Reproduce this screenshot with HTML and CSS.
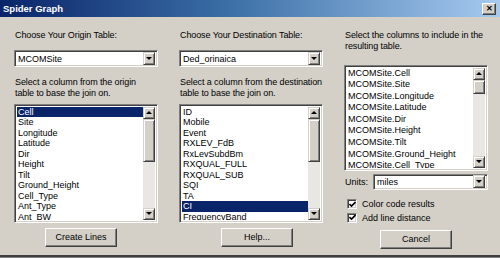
FILE: index.html
```html
<!DOCTYPE html>
<html lang="en">
<head>
  <meta charset="UTF-8" />
  <title>Spider Graph</title>
  <link rel="stylesheet" href="styles.css">
</head>
<body>
  <div class="window">
    <div class="titlebar">
      <span class="title">Spider Graph</span>
      <span class="close">&#x2715;</span>
    </div>

    <div class="panel">
      <!-- origin -->
      <div class="col">
        <p class="label first">Choose Your Origin Table:</p>
        <div class="combo"><span class="value">MCOMSite</span><span class="drop"><i class="arrow down"></i></span></div>
        <p class="label help">Select a column from the origin<br>table to base the join on.</p>
        <div class="list join">
          <ul>
            <li class="sel">Cell</li>
            <li>Site</li>
            <li>Longitude</li>
            <li>Latitude</li>
            <li>Dir</li>
            <li>Height</li>
            <li>Tilt</li>
            <li>Ground_Height</li>
            <li>Cell_Type</li>
            <li>Ant_Type</li>
            <li>Ant_BW</li>
          </ul>
          <div class="scroll">
            <span class="sb-btn"><i class="arrow up"></i></span>
            <span class="thumb"></span>
            <span class="track"></span>
            <span class="sb-btn"><i class="arrow down"></i></span>
          </div>
        </div>
        <button class="btn create">Create Lines</button>
      </div>

      <!-- destination -->
      <div class="col">
        <p class="label first">Choose Your Destination Table:</p>
        <div class="combo"><span class="value">Ded_orinaica</span><span class="drop"><i class="arrow down"></i></span></div>
        <p class="label help">Select a column from the destination<br>table to base the join on.</p>
        <div class="list join">
          <ul>
            <li>ID</li>
            <li>Mobile</li>
            <li>Event</li>
            <li>RXLEV_FdB</li>
            <li>RxLevSubdBm</li>
            <li>RXQUAL_FULL</li>
            <li>RXQUAL_SUB</li>
            <li>SQI</li>
            <li>TA</li>
            <li class="sel">CI</li>
            <li>FrequencyBand</li>
          </ul>
          <div class="scroll">
            <span class="sb-btn"><i class="arrow up"></i></span>
            <span class="thumb"></span>
            <span class="track"></span>
            <span class="sb-btn"><i class="arrow down"></i></span>
          </div>
        </div>
        <button class="btn helpbtn">Help...</button>
      </div>

      <!-- result columns -->
      <div class="col">
        <p class="label first">Select the columns to include in the<br>resulting table.</p>
        <div class="list result">
          <ul>
            <li>MCOMSite.Cell</li>
            <li>MCOMSite.Site</li>
            <li>MCOMSite.Longitude</li>
            <li>MCOMSite.Latitude</li>
            <li>MCOMSite.Dir</li>
            <li>MCOMSite.Height</li>
            <li>MCOMSite.Tilt</li>
            <li>MCOMSite.Ground_Height</li>
            <li>MCOMSite.Cell_Type</li>
          </ul>
          <div class="scroll">
            <span class="sb-btn"><i class="arrow up"></i></span>
            <span class="thumb short"></span>
            <span class="track"></span>
            <span class="sb-btn"><i class="arrow down"></i></span>
          </div>
        </div>
        <div class="units">
          <span class="units-label">Units:</span>
          <div class="combo"><span class="value">miles</span><span class="drop"><i class="arrow down"></i></span></div>
        </div>
        <label class="check first-check">
          <span class="box"><svg width="7" height="7" viewBox="0 0 7 7"><polyline points="0.5,3 2.5,5 6.5,1" fill="none" stroke="#000" stroke-width="1.6"/></svg></span>
          Color code results
        </label>
        <label class="check">
          <span class="box"><svg width="7" height="7" viewBox="0 0 7 7"><polyline points="0.5,3 2.5,5 6.5,1" fill="none" stroke="#000" stroke-width="1.6"/></svg></span>
          Add line distance
        </label>
        <button class="btn cancel">Cancel</button>
      </div>
    </div>
  </div>
</body>
</html>
```

FILE: styles.css
```css
:root {
  --face: #d4d0c8;
  --shadow: #808080;
  --dark: #404040;
  --light: #ffffff;
  --select: #0a246a;
  --track: #e9e7e3;
  --font: "Liberation Sans", Arial, sans-serif;
}
* { box-sizing: border-box; margin: 0; padding: 0; }
body {
  width: 500px;
  height: 258px;
  overflow: hidden;
  background: var(--face);
  font-family: var(--font);
  font-size: 9px;
  color: #000;
}
.window {
  height: 258px;
  display: flex;
  flex-direction: column;
  border-bottom: 1px solid var(--shadow);
  box-shadow: inset 0 -2px 0 var(--dark);
}
.titlebar {
  height: 17px;
  display: flex;
  align-items: center;
  padding: 0 4px 0 3px;
  background: linear-gradient(to right, #0a246a, #3a6ea5 45%, #a6caf0);
  color: #fff;
}
.title { font-weight: 700; font-size: 9.5px; }
.close {
  margin-left: auto;
  width: 14px;
  height: 12px;
  display: flex;
  align-items: center;
  justify-content: center;
  background: var(--face);
  color: #000;
  font-size: 8px;
  font-weight: 700;
  border: 1px solid;
  border-color: var(--light) var(--dark) var(--dark) var(--light);
  box-shadow: inset -1px -1px 0 var(--shadow);
}
.panel {
  display: flex;
  gap: 21px;
  padding-left: 14px;
}
.col {
  width: 144px;
  display: flex;
  flex-direction: column;
}
.label { line-height: 11px; white-space: nowrap; padding-left: 1px; letter-spacing: -0.1px; }
.label.first { margin-top: 13px; }
.label.help { margin-top: 9.5px; }

/* sunken fields */
.combo, .list, .box {
  background: #fff;
  border: 1px solid;
  border-color: var(--shadow) var(--light) var(--light) var(--shadow);
  box-shadow: inset 1px 1px 0 var(--dark), inset -1px -1px 0 var(--face);
}
.combo {
  height: 17px;
  margin-top: 9px;
  display: flex;
  align-items: center;
  padding: 2px;
}
.combo .value { flex: 1; padding-left: 1px; }
.drop, .sb-btn {
  display: flex;
  align-items: center;
  justify-content: center;
  background: var(--face);
  border: 1px solid;
  border-color: var(--face) var(--dark) var(--dark) var(--face);
  box-shadow: inset 1px 1px 0 var(--light), inset -1px -1px 0 var(--shadow);
}
.drop { width: 12px; height: 13px; }
.arrow { width: 0; height: 0; border-left: 3px solid transparent; border-right: 3px solid transparent; }
.arrow.down { border-top: 3px solid #000; }
.arrow.up { border-bottom: 3px solid #000; }

.list {
  display: flex;
  padding: 2px;
  overflow: hidden;
}
.list.join { margin-top: 5px; height: 119px; }
.list.result { margin-top: 12.5px; height: 106px; }
.list ul { flex: 1; list-style: none; overflow: hidden; }
.list li { line-height: 10.5px; padding-left: 1px; white-space: nowrap; }
.list.result li { line-height: 11.6px; }
.list li.sel { background: var(--select); color: #fff; }
.scroll {
  width: 12px;
  display: flex;
  flex-direction: column;
  background: var(--track);
}
.sb-btn { height: 12px; flex: none; }
.thumb {
  height: 43px;
  flex: none;
  background: var(--face);
  border: 1px solid;
  border-color: var(--face) var(--dark) var(--dark) var(--face);
  box-shadow: inset 1px 1px 0 var(--light), inset -1px -1px 0 var(--shadow);
}
.thumb.short { height: 14px; }
.track { flex: 1; }

.units {
  margin-top: 3px;
  display: flex;
  align-items: center;
}
.units-label { width: 29px; padding-left: 1px; }
.units .combo { flex: 1; margin-top: 0; height: 16px; }
.check {
  height: 13.5px;
  display: flex;
  align-items: center;
  gap: 5px;
  padding-left: 3px;
}
.first-check { margin-top: 8px; }
.box {
  width: 10px;
  height: 10px;
  display: flex;
  align-items: center;
  justify-content: center;
}

.btn {
  width: 72px;
  height: 19px;
  margin-top: 5px;
  background: var(--face);
  font-family: var(--font);
  font-size: 9px;
  color: #000;
  border: 1px solid;
  border-color: var(--light) var(--dark) var(--dark) var(--light);
  box-shadow: inset -1px -1px 0 var(--shadow);
}
.create { margin-left: 31px; }
.helpbtn { margin-left: 42px; }
.cancel { margin-left: 36px; margin-top: 5px; }
```
